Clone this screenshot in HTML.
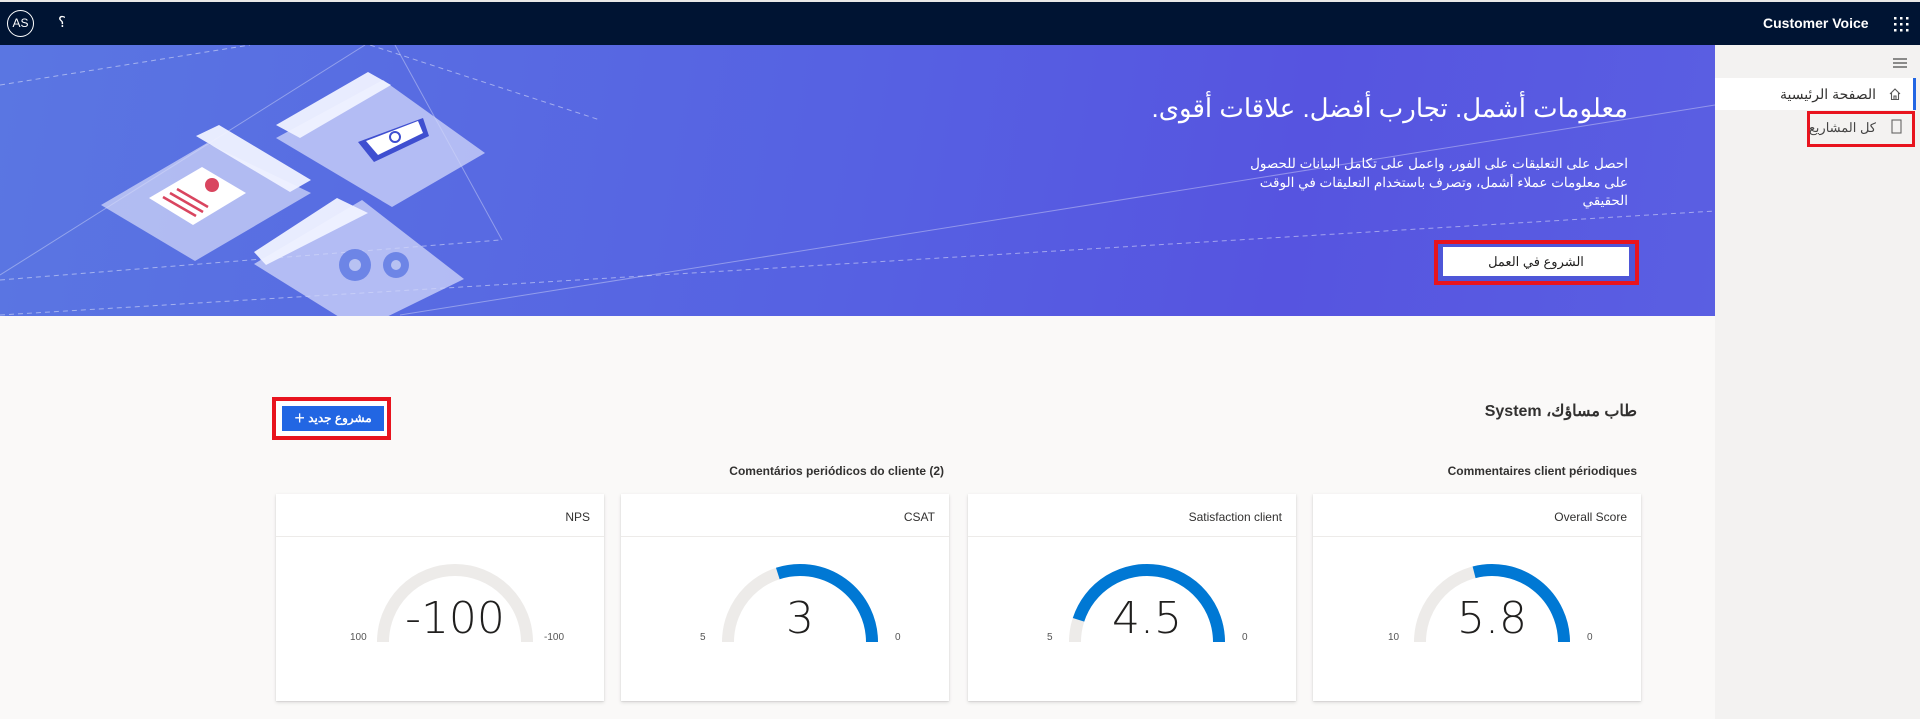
<!DOCTYPE html>
<html><head><meta charset="utf-8"><style>
*{margin:0;padding:0;box-sizing:border-box}
body{width:1920px;height:719px;overflow:hidden;background:#faf9f8;font-family:"Liberation Sans","Noto Sans CJK SC",sans-serif;position:relative;color:#201f1e}
.a{position:absolute}
.top{left:0;top:0;width:1920px;height:45px;background:#001433;border-top:2px solid #e8e8e8}
.ar{direction:rtl;text-align:right;white-space:nowrap}
.card{position:absolute;top:494px;width:328px;height:207px;background:#fff;box-shadow:0 1.6px 3.6px rgba(0,0,0,.13),0 0.3px 0.9px rgba(0,0,0,.11)}
.card .h{position:absolute;left:0;right:0;top:0;height:43px;border-bottom:1px solid #edebe9}
.card .h span{position:absolute;right:14px;top:16px;font-size:12px;color:#323130}
.card svg{position:absolute;left:0;top:43px}
.num{font-family:"DejaVu Sans","Liberation Sans",sans-serif;font-weight:200}
</style></head><body>
<div class="a top">
  <div class="a" style="left:7px;top:8px;width:27px;height:27px;border:1px solid #fff;border-radius:50%;color:#fff;font-size:12px;text-align:center;line-height:25px">AS</div>
  <div class="a" style="left:58px;top:11px;color:#fff;font-size:15px">؟</div>
  <div class="a" style="left:1763px;top:13px;color:#fff;font-size:14px;font-weight:bold">Customer Voice</div>
  <svg class="a" style="left:1893px;top:14px" width="16" height="16"><g fill="#fff"><rect x="1" y="1" width="2.5" height="2.5"/><rect x="7" y="1" width="2.5" height="2.5"/><rect x="13" y="1" width="2.5" height="2.5"/><rect x="1" y="7" width="2.5" height="2.5"/><rect x="7" y="7" width="2.5" height="2.5"/><rect x="13" y="7" width="2.5" height="2.5"/><rect x="1" y="13" width="2.5" height="2.5"/><rect x="7" y="13" width="2.5" height="2.5"/><rect x="13" y="13" width="2.5" height="2.5"/></g></svg>
</div>
<!-- banner -->
<div class="a" style="left:0;top:45px;width:1715px;height:271px;background:linear-gradient(100deg,#5a76e2 0%,#5661e2 50%,#5654e0 75%,#5a5fe2 100%);overflow:hidden">
<svg width="1715" height="271" style="position:absolute;left:0;top:0">
 <g stroke="rgba(255,255,255,.45)" stroke-width="1" fill="none" stroke-dasharray="5 4">
  <line x1="0" y1="40" x2="250" y2="0"/><line x1="0" y1="270" x2="1715" y2="166"/><line x1="370" y1="0" x2="600" y2="75"/><line x1="0" y1="235" x2="500" y2="195"/>
 </g>
 <g stroke="rgba(255,255,255,.35)" stroke-width="1" fill="none">
  <line x1="0" y1="230" x2="365" y2="0"/><line x1="395" y1="0" x2="502" y2="195"/><line x1="400" y1="270" x2="1715" y2="60"/>
 </g>
 <g>
  <polygon points="101,160 207,98 311,148 195,216" fill="rgba(215,220,250,.7)"/>
  <polygon points="196,91 219,80 311,135 290,147" fill="rgba(240,242,255,.95)"/>
  <polygon points="149,153 202,122 246,148 193,180" fill="#fff"/>
  <g stroke="#d9455f" stroke-width="2.5"><line x1="163" y1="152" x2="196" y2="171"/><line x1="170" y1="148" x2="203" y2="167"/><line x1="177" y1="144" x2="208" y2="162"/></g>
  <circle cx="212" cy="140" r="7" fill="#d9455f"/>
  <polygon points="276,93 383,35 485,108 392,162" fill="rgba(210,215,250,.75)"/>
  <polygon points="276,80 368,27 391,40 300,93" fill="rgba(240,242,255,.95)"/>
  <polygon points="358,97 423,73 429,91 374,117" fill="#3f4fd0"/>
  <polygon points="366,96 418,76 423,88 378,110" fill="#fff"/>
  <circle cx="395" cy="92" r="5" fill="none" stroke="#3f4fd0" stroke-width="2"/>
  <polygon points="254,219 362,155 464,234 360,285" fill="rgba(210,215,250,.75)"/>
  <polygon points="254,207 337,153 368,168 266,220" fill="rgba(240,242,255,.95)"/>
  <circle cx="355" cy="220" r="16" fill="#6d85e6"/><circle cx="355" cy="220" r="6" fill="#b8c2f2"/>
  <circle cx="396" cy="220" r="13" fill="#6d85e6"/><circle cx="396" cy="220" r="5" fill="#b8c2f2"/>
 </g>
</svg>
  <div class="a ar" style="right:87px;top:48px;color:#fff;font-size:26px">معلومات أشمل. تجارب أفضل. علاقات أقوى.</div>
  <div class="a ar" style="right:87px;top:110px;color:#fff;font-size:13.5px;line-height:18.5px">احصل على التعليقات على الفور، واعمل على تكامل البيانات للحصول<br>على معلومات عملاء أشمل، وتصرف باستخدام التعليقات في الوقت<br>الحقيقي</div>
  <div class="a" style="left:1434px;top:195px;width:205px;height:45px;border:4px solid #e8141e;background:#4e56d8"></div>
  <div class="a" style="left:1443px;top:202px;width:186px;height:29px;background:#fff;font-size:13px;text-align:center;line-height:29px;direction:rtl">الشروع في العمل</div>
</div>
<!-- sidebar -->
<div class="a" style="left:1715px;top:45px;width:205px;height:674px;background:#f3f2f1">
  <svg class="a" style="left:177px;top:11px" width="16" height="14"><g stroke="#444" stroke-width="1.2"><line x1="1" y1="3" x2="15" y2="3"/><line x1="1" y1="7" x2="15" y2="7"/><line x1="1" y1="11" x2="15" y2="11"/></g></svg>
  <div class="a" style="left:0;top:33px;width:198px;height:32px;background:#fff"></div>
  <div class="a" style="left:198px;top:33px;width:3px;height:32px;background:#2266e3"></div>
  <svg class="a" style="left:173px;top:42px" width="14" height="14"><path d="M2 7 L7 2 L12 7 M3.5 6 V12.5 H10.5 V6 M6 12.5 V9 H8 V12.5" stroke="#555" fill="none" stroke-width="1.1"/></svg>
  <div class="a ar" style="right:44px;top:41px;font-size:14px;color:#323130">الصفحة الرئيسية</div>
  <div class="a" style="left:92px;top:66px;width:108px;height:36px;border:3px solid #e8141e"></div>
  <svg class="a" style="left:176px;top:74px" width="12" height="16"><rect x="1" y="1" width="9" height="13" stroke="#666" fill="none" stroke-width="1.1"/></svg>
  <div class="a ar" style="right:44px;top:75px;font-size:13px;color:#444">كل المشاريع</div>
</div>
<!-- main -->
<div class="a ar" style="right:283px;top:401px;font-size:16px;font-weight:bold;color:#323130">طاب مساؤك، System</div>
<div class="a" style="left:272px;top:397px;width:119px;height:43px;border:4px solid #e8141e;background:#fff"></div>
<div class="a" style="left:282px;top:406px;width:102px;height:25px;background:#2266e3;color:#fff;font-size:12px;font-weight:bold;line-height:25px;text-align:center;direction:rtl">مشروع جديد <span style="font-weight:normal;font-size:18px;vertical-align:-2px">+</span></div>
<div class="a" style="right:283px;top:464px;font-size:12px;font-weight:bold;color:#323130">Commentaires client périodiques</div>
<div class="a" style="right:976px;top:464px;font-size:12px;font-weight:bold;color:#323130">Comentários periódicos do cliente (2)</div>

<div class="card" style="left:276px"><div class="h"><span>NPS</span></div>
<svg width="328" height="164"><path d="M107 105 A72 72 0 0 1 251 105" stroke="#edebe9" stroke-width="12" fill="none"/>
<text class="num" x="179" y="96" font-size="44" text-anchor="middle" fill="#201f1e">-100</text>
<text x="74" y="103" font-size="10" fill="#555">100</text><text x="268" y="103" font-size="10" fill="#555">-100</text></svg></div>

<div class="card" style="left:621px"><div class="h"><span>CSAT</span></div>
<svg width="328" height="164"><path d="M107 105 A72 72 0 0 1 251 105" stroke="#edebe9" stroke-width="12" fill="none"/>
<path d="M251 105 A72 72 0 0 0 156.8 36.5" stroke="#0078d4" stroke-width="12" fill="none"/>
<text class="num" x="179" y="96" font-size="44" text-anchor="middle" fill="#201f1e">3</text>
<text x="79" y="103" font-size="10" fill="#555">5</text><text x="274" y="103" font-size="10" fill="#555">0</text></svg></div>

<div class="card" style="left:968px"><div class="h"><span>Satisfaction client</span></div>
<svg width="328" height="164"><path d="M107 105 A72 72 0 0 1 251 105" stroke="#edebe9" stroke-width="12" fill="none"/>
<path d="M251 105 A72 72 0 0 0 110.5 82.8" stroke="#0078d4" stroke-width="12" fill="none"/>
<text class="num" x="179" y="96" font-size="44" text-anchor="middle" fill="#201f1e">4.5</text>
<text x="79" y="103" font-size="10" fill="#555">5</text><text x="274" y="103" font-size="10" fill="#555">0</text></svg></div>

<div class="card" style="left:1313px"><div class="h"><span>Overall Score</span></div>
<svg width="328" height="164"><path d="M107 105 A72 72 0 0 1 251 105" stroke="#edebe9" stroke-width="12" fill="none"/>
<path d="M251 105 A72 72 0 0 0 161.1 35.3" stroke="#0078d4" stroke-width="12" fill="none"/>
<text class="num" x="179" y="96" font-size="44" text-anchor="middle" fill="#201f1e">5.8</text>
<text x="75" y="103" font-size="10" fill="#555">10</text><text x="274" y="103" font-size="10" fill="#555">0</text></svg></div>
</body></html>
